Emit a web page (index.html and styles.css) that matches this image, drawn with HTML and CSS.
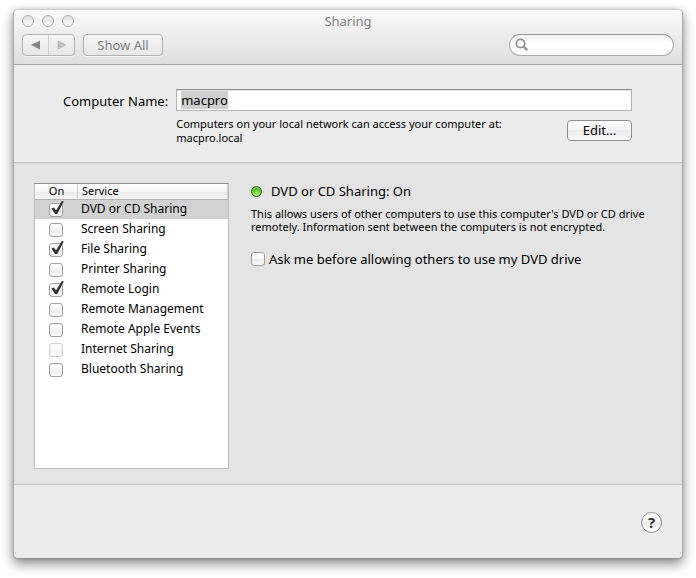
FILE: index.html
```html
<!DOCTYPE html>
<html lang="en">
<head>
<meta charset="utf-8">
<meta name="viewport" content="width=device-width, initial-scale=1">
<title>Sharing</title>
<link rel="stylesheet" href="styles.css">
</head>
<body>
<main class="window">
  <header class="toolbar">
    <div class="titlebar">
      <div class="lights">
        <button class="light" type="button" aria-label="Close"></button>
        <button class="light" type="button" aria-label="Minimize"></button>
        <button class="light" type="button" aria-label="Zoom"></button>
      </div>
      <h1 class="title">Sharing</h1>
    </div>
    <div class="tools">
      <div class="nav">
        <button class="nav-button" type="button" aria-label="Back">
          <svg width="10" height="10" viewBox="0 0 10 10"><path d="M9 .5v9L0 5z" fill="#868686"/></svg>
        </button>
        <button class="nav-button" type="button" aria-label="Forward">
          <svg width="10" height="10" viewBox="0 0 10 10"><path d="M1 1l7.500 4L1 9z" fill="#c4c4c4" stroke="#adadad" stroke-width=".8"/></svg>
        </button>
      </div>
      <button class="tool-button" type="button">Show All</button>
      <label class="search">
        <svg width="14" height="14" viewBox="0 0 14 14" fill="none" stroke="#929292"><circle cx="5.500" cy="5.500" r="4.200" stroke-width="1.800"/><path d="M8.500 8.500l3.700 3.700" stroke-width="2.400"/></svg>
        <input class="search-input" type="search" aria-label="Search">
      </label>
    </div>
  </header>

  <section class="identity">
    <label class="name-label" for="computer-name">Computer Name:</label>
    <input class="name-input" id="computer-name" type="text" value="macpro">
    <p class="name-note">Computers on your local network can access your computer at:<br>macpro.local</p>
    <button class="button" type="button">Edit…</button>
  </section>

  <section class="sharing">
    <div class="service-list">
      <table class="services">
        <thead><tr><th class="col-on">On</th><th class="col-service">Service</th></tr></thead>
        <tbody>
          <tr class="selected"><td><span class="check"><input type="checkbox" id="s1" checked><svg class="tick" viewBox="0 0 16 16"><path d="M2.500 7.500L5 6.500l2 3L12.800 0l2 .4L8.200 13H6z"/></svg></span></td><td><label for="s1">DVD or CD Sharing</label></td></tr>
          <tr><td><span class="check"><input type="checkbox" id="s2"><svg class="tick" viewBox="0 0 16 16"><path d="M2.500 7.500L5 6.500l2 3L12.800 0l2 .4L8.200 13H6z"/></svg></span></td><td><label for="s2">Screen Sharing</label></td></tr>
          <tr><td><span class="check"><input type="checkbox" id="s3" checked><svg class="tick" viewBox="0 0 16 16"><path d="M2.500 7.500L5 6.500l2 3L12.800 0l2 .4L8.200 13H6z"/></svg></span></td><td><label for="s3">File Sharing</label></td></tr>
          <tr><td><span class="check"><input type="checkbox" id="s4"><svg class="tick" viewBox="0 0 16 16"><path d="M2.500 7.500L5 6.500l2 3L12.800 0l2 .4L8.200 13H6z"/></svg></span></td><td><label for="s4">Printer Sharing</label></td></tr>
          <tr><td><span class="check"><input type="checkbox" id="s5" checked><svg class="tick" viewBox="0 0 16 16"><path d="M2.500 7.500L5 6.500l2 3L12.800 0l2 .4L8.200 13H6z"/></svg></span></td><td><label for="s5">Remote Login</label></td></tr>
          <tr><td><span class="check"><input type="checkbox" id="s6"><svg class="tick" viewBox="0 0 16 16"><path d="M2.500 7.500L5 6.500l2 3L12.800 0l2 .4L8.200 13H6z"/></svg></span></td><td><label for="s6">Remote Management</label></td></tr>
          <tr><td><span class="check"><input type="checkbox" id="s7"><svg class="tick" viewBox="0 0 16 16"><path d="M2.500 7.500L5 6.500l2 3L12.800 0l2 .4L8.200 13H6z"/></svg></span></td><td><label for="s7">Remote Apple Events</label></td></tr>
          <tr><td><span class="check"><input type="checkbox" id="s8" disabled><svg class="tick" viewBox="0 0 16 16"><path d="M2.500 7.500L5 6.500l2 3L12.800 0l2 .4L8.200 13H6z"/></svg></span></td><td><label for="s8">Internet Sharing</label></td></tr>
          <tr><td><span class="check"><input type="checkbox" id="s9"><svg class="tick" viewBox="0 0 16 16"><path d="M2.500 7.500L5 6.500l2 3L12.800 0l2 .4L8.200 13H6z"/></svg></span></td><td><label for="s9">Bluetooth Sharing</label></td></tr>
        </tbody>
      </table>
    </div>
    <div class="detail">
      <h2 class="status"><span class="lamp"></span>DVD or CD Sharing: On</h2>
      <p class="description">This allows users of other computers to use this computer's DVD or CD drive remotely. Information sent between the computers is not encrypted.</p>
      <div class="option"><span class="check"><input type="checkbox" id="ask"><svg class="tick" viewBox="0 0 16 16"><path d="M2.500 7.500L5 6.500l2 3L12.800 0l2 .4L8.200 13H6z"/></svg></span><label for="ask">Ask me before allowing others to use my DVD drive</label></div>
    </div>
  </section>

  <footer class="footer">
    <button class="help" type="button" aria-label="Help">?</button>
  </footer>
</main>
<script src="script.js"></script>
</body>
</html>
```
FILE: styles.css
```css
* { box-sizing: border-box; }

body {
  margin: 0;
  min-height: 100vh;
  padding: 9px 13px 19px;
  display: flex;
  background: #fff;
  color: #000;
  font: 13px/20px "Lucida Grande", "Noto Sans", "Open Sans", sans-serif;
}

h1, h2, p { margin: 0; font-weight: normal; }
h1, h2 { font-size: 13px; }
button, input { font: inherit; color: inherit; margin: 0; padding: 0; outline: 0; }
svg { display: block; }

.window {
  flex: 1;
  min-width: 0;
  display: flex;
  flex-direction: column;
  border: 1px solid #adadad;
  border-top-color: #cfcfcf;
  border-bottom-color: #8e8e8e;
  border-radius: 5px;
  overflow: hidden;
  background: #ececec;
  box-shadow: 0 5px 12px rgba(0, 0, 0, .45), 0 0 4px rgba(0, 0, 0, .12);
}

.toolbar {
  padding: 1px 8px 8px;
  border-bottom: 1px solid #a4a4a4;
  background: linear-gradient(#fafafa, #dfdfdf);
}
.titlebar {
  display: grid;
  grid-template-columns: 1fr auto 1fr;
  align-items: center;
  height: 20px;
}
.title { color: #838383; }
.lights { display: flex; gap: 8px; }
.light {
  width: 12px;
  height: 12px;
  border: 1px solid #adadad;
  border-radius: 50%;
  background: linear-gradient(#e2e2e2, #fafafa);
  box-shadow: 0 1px 0 #fff;
}
.tools { display: flex; gap: 8px; margin-top: 3px; }
.nav, .tool-button {
  height: 22px;
  border: 1px solid #b2b2b2;
  border-radius: 4px;
  background: linear-gradient(#f6f6f6, #e7e7e7);
  box-shadow: 0 1px 0 #f4f4f4;
}
.nav { display: flex; width: 53px; }
.nav-button {
  flex: 1;
  display: flex;
  align-items: center;
  justify-content: center;
  border: 0;
  background: none;
}
.nav-button + .nav-button { border-left: 1px solid #cfcfcf; }
.tool-button { width: 80px; line-height: 20px; color: #828282; }
.search {
  display: flex;
  align-items: center;
  gap: 4px;
  width: 165px;
  height: 22px;
  margin-left: auto;
  padding: 0 5px;
  border: 1px solid #ababab;
  border-top-color: #959595;
  border-radius: 11px;
  background: linear-gradient(#f2f2f2, #fff 40%);
}
.search-input { flex: 1; min-width: 0; border: 0; background: none; appearance: none; }

.identity {
  display: grid;
  grid-template-columns: auto 1fr auto;
  column-gap: 8px;
  padding: 24px 50px 17px 49px;
  border-bottom: 1px solid #c4c4c4;
}
.name-label { line-height: 24px; }
.name-input {
  grid-column: 2 / 4;
  min-width: 0;
  height: 22px;
  padding: 0 4px;
  border: 1px solid #b4b4b4;
  border-top-color: #8e8e8e;
  background: #fff;
  box-shadow: inset 0 1px 1px #e2e2e2;
}
.name-input::selection { background: #d0d0d0; color: #000; }
.name-note { grid-column: 2; padding-top: 4px; font-size: 11px; line-height: 14px; }
.button {
  width: 65px;
  height: 21px;
  margin-top: 7px;
  border: 1px solid #8e8e8e;
  border-radius: 4px;
  background: linear-gradient(#fff, #f4f4f4 50%, #ececec 50%, #fafafa);
  line-height: 19px;
}

.sharing {
  flex: 1;
  display: flex;
  gap: 22px;
  padding: 20px 24px 15px 20px;
  background: #e4e4e4;
  box-shadow: inset 0 1px 2px #dcdcdc;
}
.service-list {
  width: 195px;
  border: 1px solid #bdbdbd;
  border-top-color: #8e8e8e;
  background: #fff;
}
.services { width: 100%; border-collapse: collapse; table-layout: fixed; font-size: 12px; }
.services th {
  height: 16px;
  padding: 0 0 0 4px;
  background: linear-gradient(#fff, #f6f6f6 50%, #ebebeb 50%, #f6f6f6);
  box-shadow: inset 0 -1px 0 #b2b2b2, inset -1px 0 0 #d0d0d0;
  font-size: 11px;
  font-weight: normal;
  line-height: 14px;
  text-align: left;
  vertical-align: top;
}
.services .col-on { width: 43px; padding: 0; text-align: center; }
.services td { height: 20px; padding: 0 0 0 3px; line-height: 18px; vertical-align: top; }
.services td:first-child { padding: 3px 0 0 14px; }
.services .selected { background: linear-gradient(#d2d2d2 19px, #fff 19px); }

.check { position: relative; display: block; width: 14px; height: 14px; }
.check input {
  display: block;
  width: 14px;
  height: 14px;
  appearance: none;
  border: 1px solid #a2a2a2;
  border-radius: 3px;
  background: linear-gradient(#fff, #f6f6f6 50%, #ececec 50%, #fafafa);
}
.check input:disabled { opacity: .5; }
.tick {
  display: none;
  position: absolute;
  left: 0;
  top: -2px;
  width: 16px;
  height: 16px;
  fill: #333;
  pointer-events: none;
}
.check input:checked + .tick { display: block; }

.detail { flex: 1; min-width: 0; }
.status { display: flex; align-items: center; gap: 9px; line-height: 16px; }
.lamp {
  width: 11px;
  height: 11px;
  border: 1px solid #39752a;
  border-radius: 50%;
  background: radial-gradient(circle at 50% 80%, #b4f56c, #57bd2b 60%, #77c956);
}
.description { margin-top: 8px; font-size: 11px; line-height: 13px; }
.option { display: flex; align-items: center; gap: 4px; margin-top: 16px; }

.footer {
  display: flex;
  justify-content: flex-end;
  padding: 27px 20px 25px;
  border-top: 1px solid #c4c4c4;
}
.help {
  width: 21px;
  height: 21px;
  border: 1px solid #8e8e8e;
  border-radius: 50%;
  background: linear-gradient(#fff, #f4f4f4 50%, #ececec 50%, #fff);
  font-weight: bold;
  font-size: 15px;
  line-height: 19px;
  color: #333;
}
```
FILE: script.js
```js
const nameInput = document.getElementById("computer-name");
nameInput.focus();
nameInput.select();
```
